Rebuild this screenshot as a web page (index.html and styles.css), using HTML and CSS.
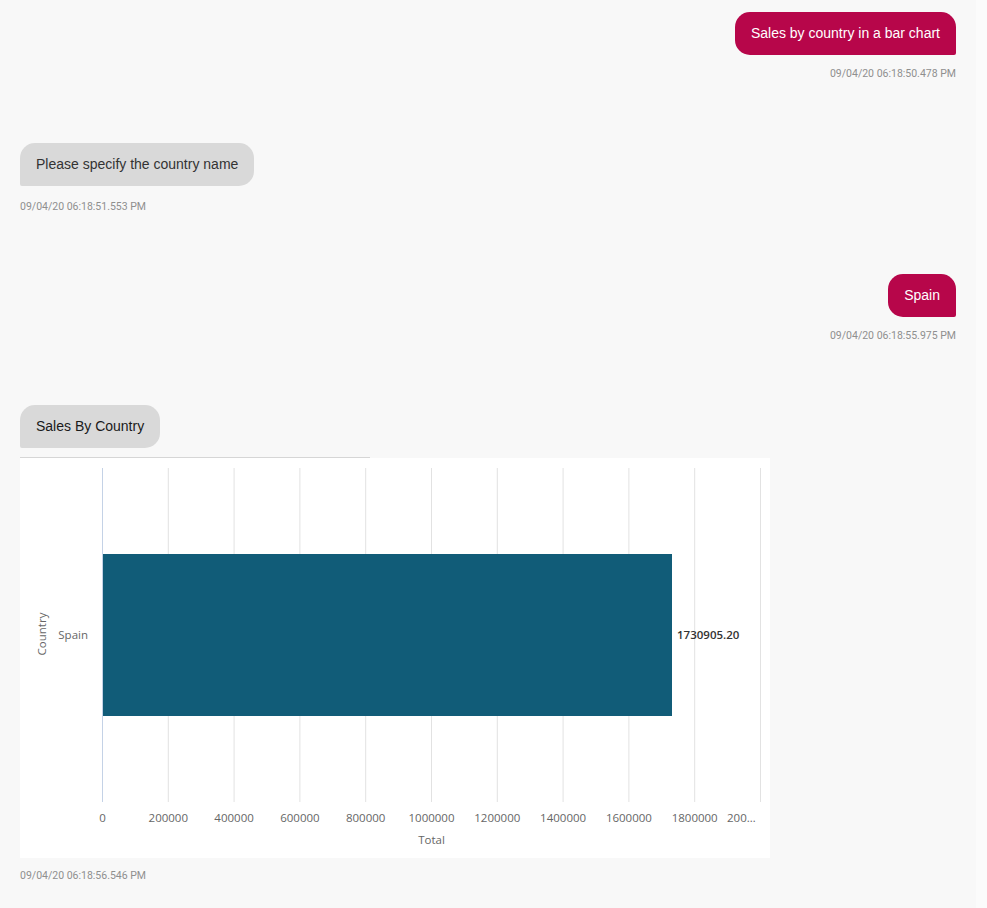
FILE: index.html
```html
<!DOCTYPE html>
<html>
<head>
<meta charset="utf-8">
<link rel="stylesheet" href="styles.css">
</head>
<body>
<div class="layout">
  <main class="chat">
    <div class="msg msg-user">
      <div class="bubble bubble-user">Sales by country in a bar chart</div>
      <div class="ts">09/04/20 06:18:50.478 PM</div>
    </div>
    <div class="msg msg-bot">
      <div class="bubble bubble-bot">Please specify the country name</div>
      <div class="ts">09/04/20 06:18:51.553 PM</div>
    </div>
    <div class="msg msg-user">
      <div class="bubble bubble-user">Spain</div>
      <div class="ts">09/04/20 06:18:55.975 PM</div>
    </div>
    <div class="msg msg-bot msg-last">
      <div class="bubble bubble-bot bubble-dark">Sales By Country</div>
      <div class="chart-rule"></div>
      <div class="chart">
        <svg width="750" height="400" viewBox="0 0 750 400" xmlns="http://www.w3.org/2000/svg">
          <g class="grid">
            <line x1="148.3" y1="10" x2="148.3" y2="344"/>
            <line x1="214.1" y1="10" x2="214.1" y2="344"/>
            <line x1="279.9" y1="10" x2="279.9" y2="344"/>
            <line x1="345.7" y1="10" x2="345.7" y2="344"/>
            <line x1="411.5" y1="10" x2="411.5" y2="344"/>
            <line x1="477.3" y1="10" x2="477.3" y2="344"/>
            <line x1="543.1" y1="10" x2="543.1" y2="344"/>
            <line x1="608.9" y1="10" x2="608.9" y2="344"/>
            <line x1="674.7" y1="10" x2="674.7" y2="344"/>
            <line x1="740.5" y1="10" x2="740.5" y2="344"/>
          </g>
          <line class="axis" x1="82.5" y1="10" x2="82.5" y2="344"/>
          <rect class="bar" x="83" y="96" width="569" height="162"/>
          <text class="value" x="657" y="181">1730905.20</text>
          <text class="cat" x="68" y="181" text-anchor="end">Spain</text>
          <text class="axis-title" transform="translate(26 176) rotate(-90)" text-anchor="middle">Country</text>
          <g class="ticks" text-anchor="middle">
            <text x="82.5" y="364">0</text>
            <text x="148.3" y="364">200000</text>
            <text x="214.1" y="364">400000</text>
            <text x="279.9" y="364">600000</text>
            <text x="345.7" y="364">800000</text>
            <text x="411.5" y="364">1000000</text>
            <text x="477.3" y="364">1200000</text>
            <text x="543.1" y="364">1400000</text>
            <text x="608.9" y="364">1600000</text>
            <text x="674.7" y="364">1800000</text>
            <text x="707" y="364" text-anchor="start">200…</text>
          </g>
          <text class="axis-title" x="411.5" y="386" text-anchor="middle">Total</text>
        </svg>
      </div>
      <div class="ts ts-chart">09/04/20 06:18:56.546 PM</div>
    </div>
  </main>
  <div class="scroll-track"></div>
</div>
</body>
</html>
```

FILE: styles.css
```css
* { box-sizing: border-box; }

html, body {
  margin: 0;
  padding: 0;
  background: #f8f8f8;
}

body {
  font-family: "Liberation Sans", Arial, sans-serif;
}

.layout {
  display: flex;
  height: 100vh;
  overflow: hidden;
}

.chat {
  flex: 1;
  padding: 12px 20px 0 20px;
  display: flex;
  flex-direction: column;
}

.scroll-track {
  width: 11px;
  background: #fbfbfb;
}

.msg {
  display: flex;
  flex-direction: column;
  margin-bottom: 63px;
}

.msg-user { align-items: flex-end; }
.msg-bot { align-items: flex-start; margin-bottom: 61px; }
.msg-last { margin-bottom: 0; }

.bubble {
  padding: 12px 16px 12px 16px;
  font-size: 14px;
  line-height: 19px;
  border-radius: 15px;
}

.bubble-user {
  background: #b7064a;
  color: #ffffff;
  border-bottom-right-radius: 2px;
}

.bubble-bot {
  background: #d9d9d9;
  color: #333333;
  border-bottom-left-radius: 2px;
}

.bubble-dark { color: #1a1a1a; }

.ts {
  margin-top: 12px;
  font-family: Roboto, "Liberation Sans", sans-serif;
  font-size: 10.5px;
  line-height: 13px;
  color: #8f8f8f;
}

.msg-bot .ts { margin-top: 14px; }
.msg-bot .ts-chart { margin-top: 11px; }

.chart-rule {
  margin-top: 9px;
  width: 350px;
  height: 1px;
  background: #d6d6d6;
}

.chart {
  width: 750px;
  height: 400px;
  background: #ffffff;
}

.chart svg {
  display: block;
  font-family: "Open Sans", "Noto Sans", sans-serif;
}

.grid line {
  stroke: #e2e2e2;
  stroke-width: 1;
}

.axis {
  stroke: #c4d2e6;
  stroke-width: 1;
}

.bar { fill: #115c78; }

.value {
  font-size: 11.5px;
  font-weight: 600;
  fill: #333333;
}

.cat, .ticks text {
  font-size: 11.5px;
  fill: #666666;
}

.axis-title {
  font-size: 11.5px;
  fill: #666666;
}
```
